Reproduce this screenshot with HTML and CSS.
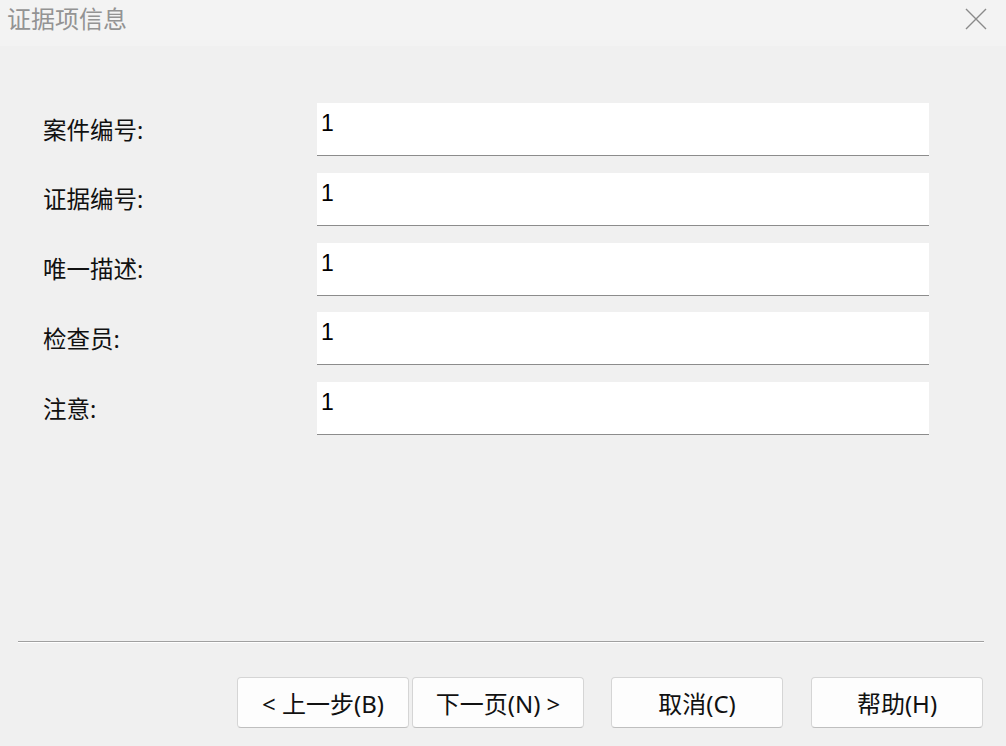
FILE: index.html
```html
<!DOCTYPE html>
<html lang="zh-CN">
<head>
<meta charset="utf-8">
<title>证据项信息</title>
<link rel="stylesheet" href="styles.css">
</head>
<body>
<div class="dialog">
  <div class="titlebar">
    <span class="title">证据项信息</span>
    <span class="close" aria-label="关闭">
      <svg width="24" height="24" viewBox="0 0 24 24"><path d="M2 2 L22 22 M22 2 L2 22" stroke="#8a8a8a" stroke-width="1.4" fill="none"/></svg>
    </span>
  </div>
  <div class="content">
    <div class="form">
      <div class="row"><span class="label">案件编号:</span><div class="field">1</div></div>
      <div class="row"><span class="label">证据编号:</span><div class="field">1</div></div>
      <div class="row"><span class="label">唯一描述:</span><div class="field">1</div></div>
      <div class="row"><span class="label">检查员:</span><div class="field">1</div></div>
      <div class="row"><span class="label">注意:</span><div class="field">1</div></div>
    </div>
    <div class="separator"></div>
    <div class="buttons">
      <button class="btn">&lt; 上一步(B)</button>
      <button class="btn btn-next">下一页(N) &gt;</button>
      <button class="btn btn-cancel">取消(C)</button>
      <button class="btn btn-help">帮助(H)</button>
    </div>
  </div>
</div>
</body>
</html>
```
FILE: styles.css
```css
html, body {
  margin: 0;
  padding: 0;
  width: 1006px;
  height: 746px;
  overflow: hidden;
  background: #f0f0f0;
  font-family: "Segoe UI", "Noto Sans", "Noto Sans CJK SC", sans-serif;
}

.dialog {
  width: 1006px;
  height: 746px;
  display: flex;
  flex-direction: column;
}

.titlebar {
  height: 46px;
  background: #f3f3f3;
  display: flex;
  align-items: center;
  justify-content: space-between;
  padding: 0 18px 0 7px;
  flex: none;
}

.title {
  font-size: 24px;
  line-height: 30px;
  color: #939393;
  margin-top: -8px;
}

.close {
  display: flex;
  width: 24px;
  height: 24px;
  margin-top: -8px;
}

.content {
  flex: 1;
  display: flex;
  flex-direction: column;
  background: #f0f0f0;
}

.form {
  padding: 57px 0 0 43px;
  display: flex;
  flex-direction: column;
  gap: 16.75px;
  height: 595px;
  box-sizing: border-box;
}

.row {
  display: flex;
  align-items: center;
  height: 53px;
}

.label {
  width: 274px;
  font-size: 23.5px;
  line-height: 30px;
  color: #111;
  flex: none;
}

.field {
  width: 612px;
  height: 53px;
  box-sizing: border-box;
  background: #fff;
  border-bottom: 1px solid #8c8c8c;
  font-family: "Liberation Sans", "Noto Sans", sans-serif;
  font-size: 23px;
  line-height: 26px;
  padding: 7px 0 0 4px;
  color: #000;
}

.separator {
  margin: 0 22px 0 18px;
  height: 1px;
  background: #a0a0a0;
  border-bottom: 1px solid #ffffff;
  flex: none;
}

.buttons {
  display: flex;
  padding: 34px 0 0 237px;
}

.btn {
  width: 172px;
  height: 51px;
  box-sizing: border-box;
  background: #fdfdfd;
  border: 1px solid #d5d5d5;
  border-bottom-color: #bfbfbf;
  border-radius: 4px;
  font-family: "Segoe UI", "Noto Sans", "Noto Sans CJK SC", sans-serif;
  font-size: 24px;
  color: #111;
  padding: 0;
}

.btn-next {
  margin-left: 3px;
}

.btn-cancel {
  margin-left: 27px;
}

.btn-help {
  margin-left: 28px;
}
```
